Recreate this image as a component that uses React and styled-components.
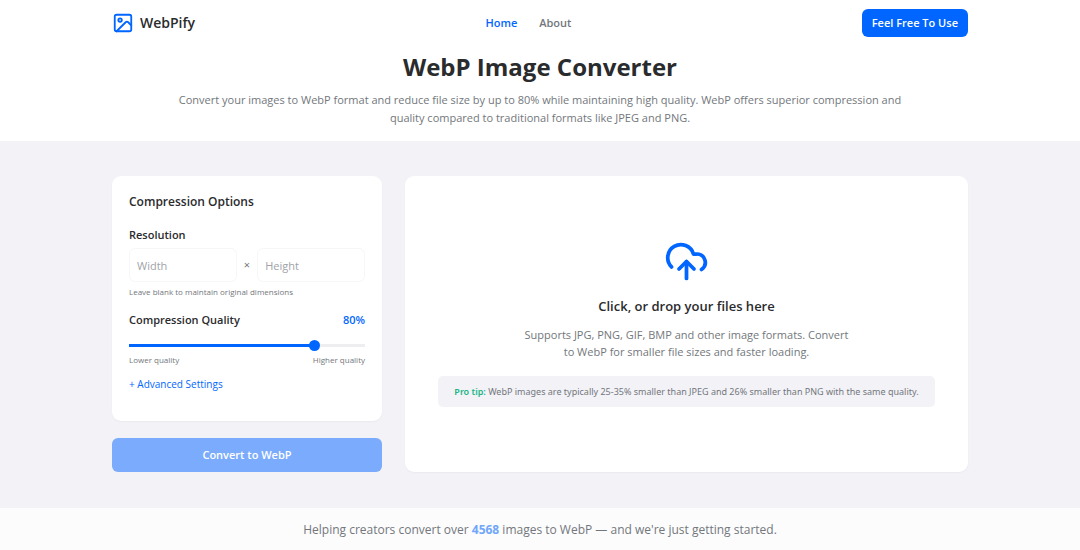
import React, { useState } from "react";
import styled, { createGlobalStyle } from "styled-components";

const c = {
  blue: "#0066ff",
  softBlue: "#7aabfc",
  ink: "#2a2b2d",
  muted: "#73777c",
  gray: "#f2f2f7",
  green: "#1db588",
};

const GlobalStyle = createGlobalStyle`
  *, *::before, *::after { box-sizing: border-box; }
  body {
    margin: 0;
    background: #fcfcfc;
    color: ${c.ink};
    font-family: "Segoe UI", "Open Sans", "Noto Sans", sans-serif;
    font-size: 11px;
    line-height: 16px;
  }
  h1, h2, h3, p { margin: 0; }
  button, input { font: inherit; }
`;

const Container = styled.div`
  width: 100%;
  max-width: 888px;
  margin: 0 auto;
  padding: 0 16px;
`;

const Top = styled.div`
  background: #fff;
`;

const HeaderRow = styled(Container).attrs({ as: "header" })`
  display: flex;
  justify-content: space-between;
  align-items: center;
  height: 46px;
`;

const Brand = styled.a`
  display: flex;
  align-items: center;
  gap: 6px;
  color: ${c.ink};
  font-size: 14px;
  font-weight: 600;
  line-height: 20px;
  text-decoration: none;

  svg { width: 22px; height: 22px; color: ${c.blue}; }
`;

const Nav = styled.nav`
  display: flex;
  gap: 22px;
`;

const NavLink = styled.a`
  color: ${(p) => (p.$active ? c.blue : c.muted)};
  font-weight: 600;
  text-decoration: none;
`;

const Button = styled.button`
  border: 0;
  border-radius: 6px;
  background: ${(p) => (p.$soft ? c.softBlue : c.blue)};
  color: #fff;
  font-weight: 600;
  height: ${(p) => (p.$soft ? 34 : 28)}px;
  padding: 0 10px;
`;

const Hero = styled(Container)`
  padding-top: 4px;
  padding-bottom: 14px;
  text-align: center;
`;

const Title = styled.h1`
  font-size: 24px;
  font-weight: 700;
  line-height: 34px;
`;

const Lead = styled.p`
  max-width: 740px;
  margin: 7px auto 0;
  color: ${c.muted};
  line-height: 18px;
`;

const Band = styled.main`
  background: ${c.gray};
  padding: 35px 0 36px;
`;

const Columns = styled(Container)`
  display: grid;
  grid-template-columns: 270px 1fr;
  gap: 23px;
`;

const Side = styled.div`
  display: flex;
  flex-direction: column;
  gap: 17px;
`;

const Card = styled.section`
  background: #fff;
  border-radius: 9px;
  box-shadow: 0 1px 2px rgba(20, 20, 60, 0.04);
`;

const Options = styled(Card)`
  display: flex;
  flex-direction: column;
  align-items: stretch;
  padding: 17px 17px 29px;
`;

const CardTitle = styled.h2`
  font-size: 12px;
  font-weight: 600;
  line-height: 18px;
`;

const GroupLabel = styled.label`
  font-weight: 600;
`;

const Sizes = styled.div`
  display: grid;
  grid-template-columns: 1fr auto 1fr;
  align-items: center;
  gap: 7px;
  margin-top: 5px;
  color: ${c.muted};
`;

const SizeInput = styled.input`
  width: 100%;
  min-width: 0;
  height: 34px;
  padding: 0 7px;
  border: 1px solid #f7f7f9;
  border-radius: 6px;
  background: #fff;
  color: ${c.ink};

  &::placeholder { color: #a0a3a8; opacity: 1; }
`;

const Group = styled.div`
  display: flex;
  flex-direction: column;
  margin-top: ${(p) => (p.$tight ? 14 : 16)}px;
`;

const Between = styled.div`
  display: flex;
  justify-content: space-between;
`;

const Value = styled.output`
  color: ${c.blue};
  font-weight: 600;
`;

const Hint = styled.p`
  color: ${c.muted};
  font-size: 8px;
  line-height: 12px;
  margin-top: ${(p) => (p.$spaced ? 4 : 0)}px;
`;

const Slider = styled.input`
  appearance: none;
  width: 100%;
  height: 11px;
  margin: 12px 0 3px;
  background: linear-gradient(${c.blue}, ${c.blue}) 0 / var(--fill) 3px no-repeat,
    linear-gradient(#eeeef1, #eeeef1) 0 / 100% 3px no-repeat;

  &::-webkit-slider-thumb {
    appearance: none;
    width: 11px;
    height: 11px;
    border-radius: 50%;
    background: ${c.blue};
  }
`;

const TextButton = styled.button`
  align-self: flex-start;
  margin-top: 10px;
  padding: 0;
  border: 0;
  background: none;
  color: ${c.blue};
  font-size: 10px;
`;

const DropZone = styled(Card)`
  display: flex;
  flex-direction: column;
  align-items: center;
  justify-content: center;
  padding: 0 16px 2px;
  text-align: center;

  svg { width: 45px; height: 45px; color: ${c.blue}; }
`;

const DropTitle = styled.h3`
  margin-top: 12px;
  font-size: 13px;
  font-weight: 600;
  line-height: 20px;
`;

const DropText = styled.p`
  max-width: 330px;
  margin-top: 10px;
  color: ${c.muted};
  line-height: 17px;
`;

const Tip = styled.p`
  margin-top: 16px;
  padding: 8px 16px;
  border-radius: 5px;
  background: ${c.gray};
  color: ${c.muted};
  font-family: "Segoe UI", "Noto Sans", sans-serif;
  font-size: 9px;
  line-height: 15px;

  strong { color: ${c.green}; font-weight: 600; }
`;

const Footer = styled.footer`
  padding: 13px 16px 11px;
  background: #fcfcfc;
  color: ${c.muted};
  font-size: 12px;
  line-height: 18px;
  text-align: center;

  strong { color: #71a7fb; font-weight: 700; }
`;

const Icon = ({ children }) => (
  <svg viewBox="0 0 24 24" fill="none" stroke="currentColor" strokeWidth="2" strokeLinecap="round" strokeLinejoin="round" aria-hidden="true">
    {children}
  </svg>
);

export default function App() {
  const [quality, setQuality] = useState(80);

  return (
    <>
      <GlobalStyle />
      <Top>
        <HeaderRow>
          <Brand href="#">
            <Icon>
              <rect x="3" y="3" width="18" height="18" rx="2" />
              <circle cx="8.8" cy="8.8" r="1.9" />
              <path d="m21 14.5-3.3-3.3a2 2 0 0 0-2.8 0L5 21" />
            </Icon>
            WebPify
          </Brand>
          <Nav>
            <NavLink href="#home" $active>Home</NavLink>
            <NavLink href="#about">About</NavLink>
          </Nav>
          <Button type="button">Feel Free To Use</Button>
        </HeaderRow>
        <Hero>
          <Title>WebP Image Converter</Title>
          <Lead>
            Convert your images to WebP format and reduce file size by up to 80% while maintaining high quality. WebP
            offers superior compression and quality compared to traditional formats like JPEG and PNG.
          </Lead>
        </Hero>
      </Top>
      <Band>
        <Columns>
          <Side>
            <Options>
              <CardTitle>Compression Options</CardTitle>
              <Group>
                <GroupLabel htmlFor="width">Resolution</GroupLabel>
                <Sizes>
                  <SizeInput id="width" placeholder="Width" inputMode="numeric" />
                  <span>×</span>
                  <SizeInput aria-label="Height" placeholder="Height" inputMode="numeric" />
                </Sizes>
                <Hint $spaced>Leave blank to maintain original dimensions</Hint>
              </Group>
              <Group $tight>
                <Between>
                  <GroupLabel htmlFor="quality">Compression Quality</GroupLabel>
                  <Value htmlFor="quality">{quality}%</Value>
                </Between>
                <Slider
                  id="quality"
                  type="range"
                  min="0"
                  max="100"
                  value={quality}
                  onChange={(e) => setQuality(Number(e.target.value))}
                  style={{ "--fill": `${quality}%` }}
                />
                <Between>
                  <Hint>Lower quality</Hint>
                  <Hint>Higher quality</Hint>
                </Between>
              </Group>
              <TextButton type="button">+ Advanced Settings</TextButton>
            </Options>
            <Button type="button" $soft>Convert to WebP</Button>
          </Side>
          <DropZone>
            <Icon>
              <path d="M4 14.899A7 7 0 1 1 15.71 8h1.79a4.5 4.5 0 0 1 2.5 8.242" />
              <path d="M12 12v9" />
              <path d="m16 16-4-4-4 4" />
            </Icon>
            <DropTitle>Click, or drop your files here</DropTitle>
            <DropText>
              Supports JPG, PNG, GIF, BMP and other image formats. Convert to WebP for smaller file sizes and faster
              loading.
            </DropText>
            <Tip>
              <strong>Pro tip:</strong> WebP images are typically 25-35% smaller than JPEG and 26% smaller than PNG with
              the same quality.
            </Tip>
          </DropZone>
        </Columns>
      </Band>
      <Footer>
        Helping creators convert over <strong>4568</strong> images to WebP — and we're just getting started.
      </Footer>
    </>
  );
}
